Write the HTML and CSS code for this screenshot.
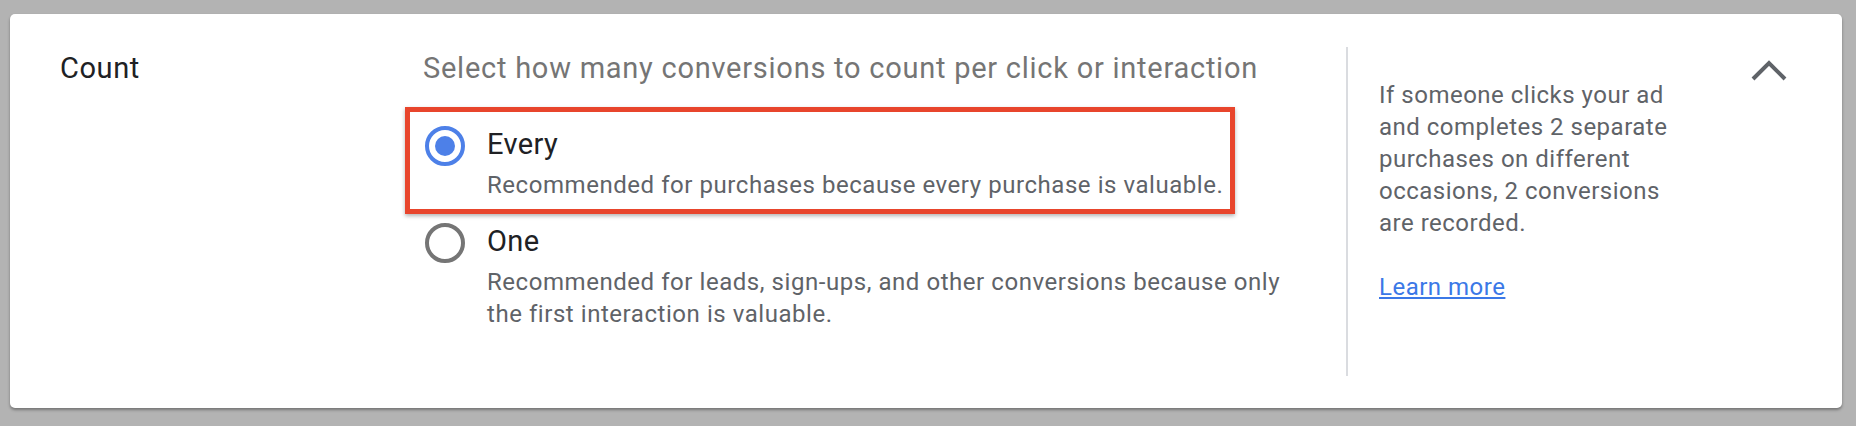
FILE: index.html
```
<!DOCTYPE html>
<html lang="en">
<head>
  <meta charset="UTF-8" />
  <meta name="viewport" content="width=device-width, initial-scale=1.0"/>
  <title>Conversion count setting</title>
  <link rel="stylesheet" href="styles.css">
</head>
<body>
  <div class="card">
    <div class="label">Count</div>

    <div class="main">
      <div class="question">Select how many conversions to count per click or interaction</div>
      <div class="options">
        <label class="option highlight">
          <span class="radio checked"></span>
          <span class="option-text">
            <span class="option-title">Every</span>
            <span class="option-desc">Recommended for purchases because every purchase is valuable.</span>
          </span>
        </label>
        <label class="option">
          <span class="radio"></span>
          <span class="option-text">
            <span class="option-title">One</span>
            <span class="option-desc">Recommended for leads, sign-ups, and other conversions because only the first interaction is valuable.</span>
          </span>
        </label>
      </div>
    </div>

    <div class="help">
      <p>If someone clicks your ad and completes 2 separate purchases on different occasions, 2 conversions are recorded.</p>
      <a href="#" class="learn">Learn more</a>
    </div>

    <div class="toggle">
      <svg width="40" height="24" viewBox="0 0 40 24">
        <polyline points="4,20 20,4 36,20" fill="none" stroke="#5f6368" stroke-width="4" />
      </svg>
    </div>
  </div>
</body>
</html>
```
FILE: styles.css
```
body { margin: 0; padding: 14px 14px 18px 10px; background: #b3b3b3; font-family: Roboto, "Noto Sans", Arial, sans-serif; }
.card { display: flex; align-items: flex-start; width: 1832px; height: 394px; box-sizing: border-box; padding-left: 50px; background: #fff; border-radius: 5px; box-shadow: 0 2px 3px rgba(0,0,0,0.35); }
.label { width: 345px; margin-top: 36px; font-size: 29px; line-height: 36px; letter-spacing: 0.6px; color: #202124; }
.main { width: 882px; padding: 36px 0 0 18px; margin-right: 41px; }
.question { font-size: 29px; line-height: 36px; letter-spacing: 0.75px; color: #757575; white-space: nowrap; }
.options { display: flex; flex-direction: column; gap: 22px; margin-top: 40px; }
.option { position: relative; display: flex; align-items: flex-start; gap: 22px; cursor: pointer; }
.option.highlight::after { content: ""; position: absolute; top: -19px; left: -18px; width: 830px; bottom: -13px; box-sizing: border-box; border: 5px solid #e8452c; box-shadow: 0 2px 4px rgba(0,0,0,0.3); pointer-events: none; }
.radio { flex: none; width: 40px; height: 40px; margin-left: 2px; box-sizing: border-box; border: 4px solid #757575; border-radius: 50%; display: flex; align-items: center; justify-content: center; }
.radio.checked { border-color: #4d80e8; }
.radio.checked::before { content: ""; width: 20px; height: 20px; border-radius: 50%; background: #4d80e8; }
.option-text { display: flex; flex-direction: column; gap: 7px; }
.option-title { font-size: 29px; line-height: 36px; letter-spacing: 0.4px; color: #202124; }
.option-desc { font-size: 24px; line-height: 32px; letter-spacing: 0.55px; color: #5f6368; }
.help { width: 403px; height: 329px; box-sizing: border-box; margin-top: 33px; padding: 32px 0 0 31px; border-left: 2px solid #dadce0; }
.help p { margin: 0; max-width: 310px; font-size: 24px; line-height: 32px; letter-spacing: 0.5px; color: #5f6368; }
.learn { display: inline-block; margin-top: 32px; font-size: 24px; line-height: 32px; letter-spacing: 0.5px; color: #3b78e7; }
.toggle { padding-top: 45px; }
.toggle svg { display: block; }
```
